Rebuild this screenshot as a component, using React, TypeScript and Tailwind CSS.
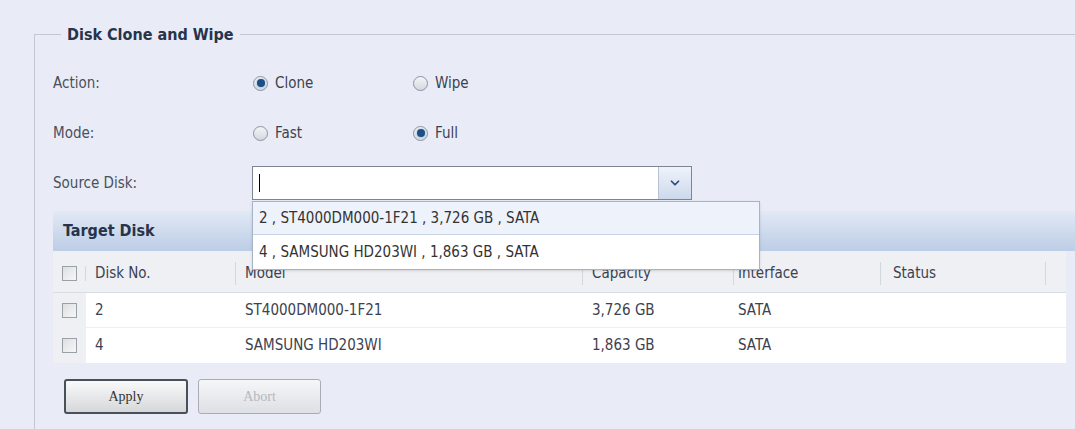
import { ChevronDown } from "lucide-react";

const font = { fontFamily: "'DejaVu Sans Condensed', 'Liberation Sans', sans-serif" };

function Radio({ checked, label }: { checked?: boolean; label: string }) {
  return (
    <label className="flex w-[160px] items-center gap-[7px] text-[15px] text-[#3c4250]">
      <span className="flex h-[15px] w-[15px] items-center justify-center rounded-full border border-[#8a93a3] bg-gradient-to-b from-[#f4f5f7] to-[#d4d8de]">
        {checked && <span className="h-[8px] w-[8px] rounded-full bg-[#1d4f86] shadow-[0_0_2px_#6fa6de]" />}
      </span>
      {label}
    </label>
  );
}

function Check() {
  return <span className="block h-[15px] w-[15px] border border-[#9aa0a8] bg-gradient-to-br from-[#dcdfe3] to-[#f7f7f7]" />;
}

const rows = [
  { no: "2", model: "ST4000DM000-1F21", cap: "3,726 GB", iface: "SATA" },
  { no: "4", model: "SAMSUNG HD203WI", cap: "1,863 GB", iface: "SATA" },
];

export default function App() {
  return (
    <div className="h-[429px] w-[1075px] overflow-hidden bg-[#e9ecf6] pt-[34px] pl-[34px]" style={font}>
      <div className="relative h-[420px] border-l border-t border-[#c2c7d2]">
        <div className="absolute -top-[12px] left-[26px] bg-[#e9ecf6] px-[6px] text-[16px] font-bold text-[#27344a]">
          Disk Clone and Wipe
        </div>
        <div className="flex flex-col pt-[23px] pl-[18px]">
          <div className="flex h-[50px] items-center">
            <span className="w-[200px] text-[15px] text-[#4a505c]">Action:</span>
            <Radio checked label="Clone" />
            <Radio label="Wipe" />
          </div>
          <div className="flex h-[50px] items-center">
            <span className="w-[200px] text-[15px] text-[#4a505c]">Mode:</span>
            <Radio label="Fast" />
            <Radio checked label="Full" />
          </div>
          <div className="relative z-10 flex h-[50px] items-center">
            <span className="w-[199px] text-[15px] text-[#4a505c]">Source Disk:</span>
            <div className="flex h-[34px] w-[440px] border border-[#7d8595] bg-white">
              <div className="flex flex-1 items-center pl-[6px]">
                <span className="h-[18px] w-px bg-black" />
              </div>
              <div className="flex w-[33px] items-center justify-center border-l border-[#b7c2d6] bg-gradient-to-b from-[#eef3fb] to-[#cdd9ec]">
                <ChevronDown className="h-[14px] w-[14px] text-[#2d4a78]" strokeWidth={3} />
              </div>
            </div>
            <div className="absolute left-[199px] top-[43px] w-[508px] border border-[#a7b3c6] bg-white text-[15px] text-[#333] shadow-sm">
              <div className="flex h-[33px] items-center border-b border-[#c9d3e3] bg-[#eef2fa] px-[6px]">2 , ST4000DM000-1F21 , 3,726 GB , SATA</div>
              <div className="flex h-[34px] items-center px-[6px]">4 , SAMSUNG HD203WI , 1,863 GB , SATA</div>
            </div>
          </div>
          <div className="mt-[3px] flex h-[40px] items-center bg-gradient-to-b from-[#e2e9f6] to-[#bccde6] pl-[10px] text-[16px] font-bold text-[#27344a]">
            Target Disk
          </div>
          <div className="w-[1013px] bg-white text-[15px] text-[#3c4250]">
            <div className="flex h-[42px] items-center border-b border-[#d6dbe4] bg-[#eef0f4] pt-[4px]">
              <div className="flex w-[33px] justify-center border-r border-[#d3d7de]"><Check /></div>
              <div className="w-[150px] border-r border-[#d3d7de] pl-[9px]">Disk No.</div>
              <div className="w-[347px] border-r border-[#d3d7de] pl-[9px]">Model</div>
              <div className="w-[151px] border-r border-[#d3d7de] pl-[9px]">Capacity</div>
              <div className="w-[147px] border-r border-[#d3d7de] pl-[4px]">Interface</div>
              <div className="w-[165px] border-r border-[#d3d7de] pl-[12px]">Status</div>
            </div>
            {rows.map((r, i) => (
              <div key={r.no} className={`flex h-[35px] items-center ${i === 0 ? "border-b border-[#eef0f3]" : ""}`}>
                <div className="flex h-full w-[33px] items-center justify-center bg-[#eef0f4]"><Check /></div>
                <div className="w-[150px] pl-[9px]">{r.no}</div>
                <div className="w-[347px] pl-[9px]">{r.model}</div>
                <div className="w-[151px] pl-[9px]">{r.cap}</div>
                <div className="w-[147px] pl-[4px]">{r.iface}</div>
              </div>
            ))}
          </div>
          <div className="mt-[16px] flex gap-[10px] pl-[11px]" style={{ fontFamily: "'Liberation Serif', serif" }}>
            <button className="h-[35px] w-[124px] rounded-[3px] border-2 border-[#4a5058] bg-gradient-to-b from-[#fafafa] to-[#d5d7da] text-[14px] text-[#333]">Apply</button>
            <button className="h-[35px] w-[123px] rounded-[3px] border border-[#a9adb3] bg-gradient-to-b from-[#f5f6f8] to-[#dde0e4] text-[14px] text-[#b5b8bd]">Abort</button>
          </div>
        </div>
      </div>
    </div>
  );
}
